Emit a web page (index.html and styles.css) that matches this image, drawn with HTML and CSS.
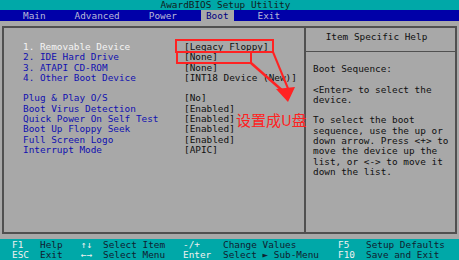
FILE: index.html
```html
<!DOCTYPE html>
<html lang="zh">
<head>
<meta charset="utf-8">
<title>AwardBIOS Setup Utility</title>
<link rel="stylesheet" href="styles.css">
</head>
<body>
<div class="screen">
  <header class="title">AwardBIOS Setup Utility</header>
  <nav class="menu">
    <span class="tab">Main</span>
    <span class="tab">Advanced</span>
    <span class="tab">Power</span>
    <span class="tab active">Boot</span>
    <span class="tab">Exit</span>
  </nav>
  <main class="body">
    <div class="frame">
      <section class="items">
        <span class="label sel">1. Removable Device</span><span class="val">[Legacy Floppy]</span>
        <span class="label">2. IDE Hard Drive</span><span class="val">[None]</span>
        <span class="label">3. ATAPI CD-ROM</span><span class="val">[None]</span>
        <span class="label">4. Other Boot Device</span><span class="val">[INT18 Device (New)]</span>
        <span class="label">&nbsp;</span><span class="val">&nbsp;</span>
        <span class="label">Plug &amp; Play O/S</span><span class="val">[No]</span>
        <span class="label">Boot Virus Detection</span><span class="val">[Enabled]</span>
        <span class="label">Quick Power On Self Test</span><span class="val">[Enabled]</span>
        <span class="label">Boot Up Floppy Seek</span><span class="val">[Enabled]</span>
        <span class="label">Full Screen Logo</span><span class="val">[Enabled]</span>
        <span class="label">Interrupt Mode</span><span class="val">[APIC]</span>
      </section>
      <aside class="help">
        <div class="help-head">Item Specific Help</div>
        <div class="help-text">
          <p>Boot Sequence:</p>
          <p>&lt;Enter&gt; to select the<br>device.</p>
          <p>To select the boot<br>sequence, use the up or<br>down arrow. Press &lt;+&gt; to<br>move the device up the<br>list, or &lt;-&gt; to move it<br>down the list.</p>
        </div>
      </aside>
    </div>
  </main>
  <footer class="keys">
    <span class="k">F1</span><span class="d">Help</span><span class="k">↑↓</span><span class="d">Select Item</span><span class="k">-/+</span><span class="d">Change Values</span><span class="k">F5</span><span class="d">Setup Defaults</span>
    <span class="k">ESC</span><span class="d">Exit</span><span class="k">←→</span><span class="d">Select Menu</span><span class="k">Enter</span><span class="d">Select ► Sub-Menu</span><span class="k">F10</span><span class="d">Save and Exit</span>
  </footer>

  <svg class="annot" width="459" height="260" viewBox="0 0 459 260">
    <rect x="176" y="40" width="97" height="12" fill="none" stroke="#f22" stroke-width="2"/>
    <rect x="177" y="52" width="74" height="11" fill="none" stroke="#f22" stroke-width="2"/>
    <line x1="273" y1="52" x2="289" y2="91" stroke="#f22" stroke-width="2"/>
    <line x1="251" y1="63" x2="284" y2="92" stroke="#f22" stroke-width="2.5"/>
    <polygon points="276,89 295,87 288,102" fill="#f22"/>
  </svg>
  <div class="note">设置成U盘</div>
</div>
</body>
</html>
```

FILE: styles.css
```css
* { box-sizing: border-box; }

html, body {
  margin: 0;
  padding: 0;
  background: #a8a8a8;
}

.screen {
  position: relative;
  width: 459px;
  height: 260px;
  overflow: hidden;
  background: #a8a8a8;
  font-family: "DejaVu Sans Mono", "Liberation Mono", monospace;
  font-size: 9.4px;
  line-height: 10.3px;
  color: #101010;
}

.title {
  height: 10px;
  line-height: 10px;
  background: #00a8a8;
  color: #102020;
  text-align: center;
  padding-right: 8px;
}

.menu {
  height: 11px;
  background: #0000a8;
  display: flex;
  gap: 19px;
  padding-left: 18px;
}

.tab {
  padding: 0 5px;
  line-height: 11px;
  color: #b8b8d8;
}

.tab.active {
  background: #a8a8a8;
  color: #000080;
}

.body {
  height: 218px;
  padding: 5px 2px 0 2px;
}

.frame {
  height: 208px;
  border: 2px solid #505050;
  display: grid;
  grid-template-columns: 300px 1fr;
}

.items {
  padding: 14px 0 0 19px;
  display: grid;
  grid-template-columns: 161px auto;
  grid-auto-rows: 10.3px;
  align-content: start;
}

.label {
  color: #1010b0;
  white-space: pre;
}

.label.sel {
  color: #f4f4f4;
}

.val {
  color: #101010;
  white-space: pre;
}

.help {
  border-left: 2px solid #505050;
}

.help-head {
  height: 24px;
  border-bottom: 1px solid #505050;
  padding-top: 4px;
  text-align: center;
  padding-right: 8px;
  color: #101010;
}

.help-text {
  padding: 12px 0 0 7px;
  color: #101010;
}

.help-text p {
  margin: 0 0 10.3px 0;
}

.keys {
  position: absolute;
  left: 0;
  top: 239px;
  width: 459px;
  height: 21px;
  background: #00a8a8;
  padding: 1px 0 0 12px;
  display: grid;
  grid-template-columns: 28px 41px 22px 80px 40px 115px 28px auto;
  grid-auto-rows: 10px;
  line-height: 10px;
  white-space: pre;
}

.keys .k {
  color: #f0f0f0;
}

.keys .d {
  color: #102030;
}

.annot {
  position: absolute;
  left: 0;
  top: 0;
  pointer-events: none;
}

.note {
  position: absolute;
  left: 236px;
  top: 111px;
  font-family: "Noto Sans CJK SC", sans-serif;
  font-size: 15px;
  line-height: 17px;
  color: #f22;
}
```
